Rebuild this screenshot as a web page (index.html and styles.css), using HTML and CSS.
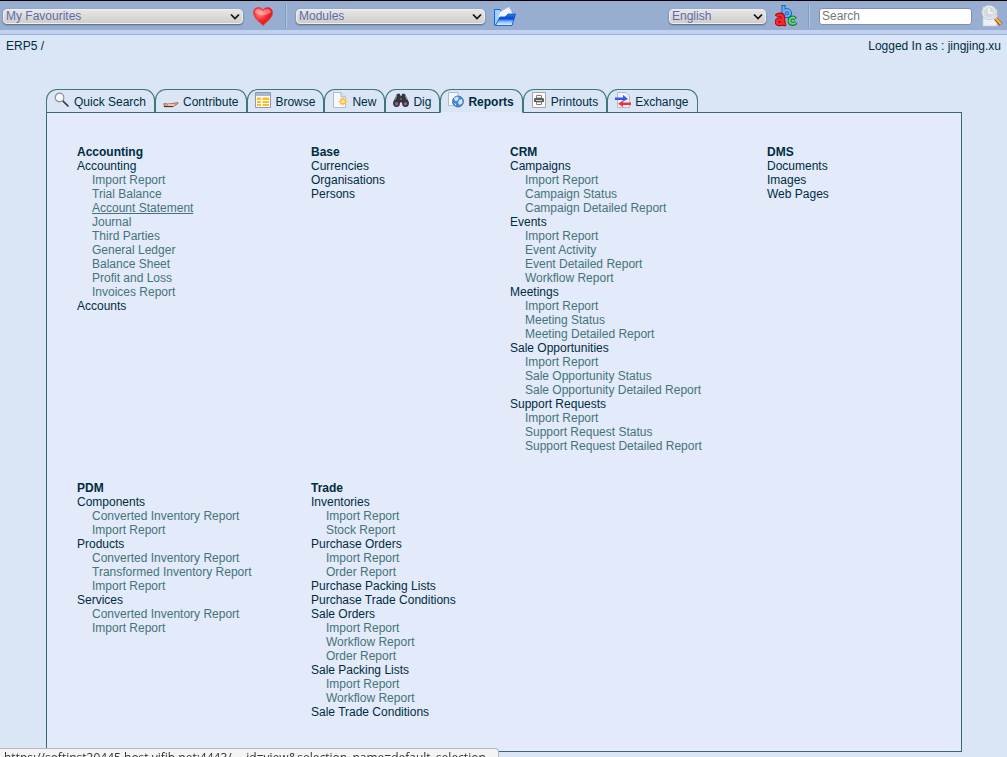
FILE: index.html
```
<!DOCTYPE html>
<html lang="en">
<head>
<meta charset="utf-8">
<title>ERP5</title>
<link rel="stylesheet" href="styles.css">
</head>
<body>
<header class="bar">
  <form class="group">
    <select class="pick wide" aria-label="My Favourites"><option>My Favourites</option></select>
    <button class="icon-btn" type="button" aria-label="Go to favourite">
      <svg width="22" height="22" viewBox="0 0 22 22"><defs><radialGradient id="h" cx=".35" cy=".35" r=".8"><stop offset="0" stop-color="#ff8a84"/><stop offset=".45" stop-color="#f8282c"/><stop offset="1" stop-color="#d00812"/></radialGradient></defs><path d="M11 20.500C8 17 1.500 13.500 1.500 7.500C1.500 4 4 2.500 6.500 2.500C9 2.500 10.500 4 11 5C11.500 4 13 2.500 15.500 2.500C18 2.500 20.500 4 20.500 7.500C20.500 13.500 14 17 11 20.500Z" fill="url(#h)" stroke="#d8444c" stroke-width=".8"/><path d="M3 7.500C3 4.500 5 3.700 7 3.900C9 4.100 10.500 6 11 6.500C12 5 14 3.700 16 4C18 4.400 19 5.500 19 7.500C14 11 8 11 3 7.500Z" fill="#fff" opacity=".35"/></svg>
    </button>
    <span class="rule"></span>
    <select class="pick modules" aria-label="Modules"><option>Modules</option></select>
    <button class="icon-btn" type="button" aria-label="Go to module">
      <svg width="22" height="22" viewBox="0 0 22 22"><defs><linearGradient id="f" x1="0" y1="0" x2="0" y2="1"><stop offset="0" stop-color="#2b80ee"/><stop offset=".4" stop-color="#0646d8"/><stop offset=".65" stop-color="#78baff"/><stop offset="1" stop-color="#f4fbff"/></linearGradient></defs><path d="M0.500 4.500H6L7 6.500H18V20H0.500Z" fill="#9dd4ff" stroke="#1764dc"/><path d="M4 12L6 7L15 2L19 9V12Z" fill="#f3f4ff" stroke="#c5c9ef" stroke-width=".7"/><path d="M1.500 20.500L6 12H11L14 9H21.500L18 20.500Z" fill="url(#f)" stroke="#0d4bd2" stroke-width=".8"/></svg>
    </button>
  </form>
  <form class="group">
    <select class="pick language" aria-label="Language"><option>English</option></select>
    <button class="icon-btn" type="button" aria-label="Change language">
      <svg width="22" height="22" viewBox="0 0 22 22" fill="none" stroke-linejoin="round"><g stroke="#1d56b4" stroke-width="4"><path d="M8.500 0V11"/><ellipse cx="12" cy="8.200" rx="3" ry="3"/></g><g stroke="#62b2f5" stroke-width="2.200"><path d="M8.500 .8V11"/><ellipse cx="12" cy="8.200" rx="3" ry="3"/></g><g stroke="#a9040f" stroke-width="4.600"><path d="M1.500 11.500C3.500 8.800 8 9.400 8 12.500V17.500Q8.300 19.200 11 18.800"/><ellipse cx="4.700" cy="16.800" rx="2.900" ry="2.200"/></g><g stroke="#f5282f" stroke-width="2.600"><path d="M2 11.200C4 9 8 9.600 8 12.500V17.500Q8.300 19.200 10.400 18.800"/><ellipse cx="4.700" cy="16.800" rx="2.900" ry="2.200"/></g><path d="M20.500 14C18 11.200 14.500 12.500 14.500 15.800C14.500 19 18 20.200 21 17.500" stroke="#087a35" stroke-width="4"/><path d="M20 13.500C17.500 11.500 14.500 13 14.500 15.800C14.500 18.700 18 19.700 20.500 17.800" stroke="#69d678" stroke-width="2"/></svg>
    </button>
    <span class="rule"></span>
    <input class="search" type="text" placeholder="Search" aria-label="Search">
    <button class="icon-btn" type="button" aria-label="Search">
      <svg width="22" height="22" viewBox="0 0 22 22"><path d="M2 2H13L16 5V21H2Z" fill="#eceff6" stroke="#c4cddd" stroke-width=".7"/><path d="M14.500 13.500L20 19.500" stroke="#a65b12" stroke-width="4"/><path d="M14.500 13L20 19" stroke="#f6b94c" stroke-width="2"/><circle cx="8" cy="7.500" r="6.400" fill="#d3dadd" stroke="#e6ebef" stroke-width="2"/><circle cx="8" cy="7.500" r="7.200" fill="none" stroke="#aab4c0" stroke-width=".6"/><path d="M8 3V8H12" fill="none" stroke="#f4f6f8" stroke-width="1.600"/></svg>
    </button>
  </form>
</header>
<div class="crumbs"><nav><a href="#">ERP5</a> /</nav><span>Logged In as : jingjing.xu</span></div>
<main class="main">
  <nav class="tabs">
    <a class="tab" href="#"><svg width="16" height="16" viewBox="0 0 16 16"><circle cx="5.500" cy="5.500" r="4.300" fill="#f4f7fc" stroke="#8c929b" stroke-width="1.200"/><path d="M8.800 8.800L14.500 14.500" stroke="#333b48" stroke-width="1.700"/></svg>Quick Search</a>
    <a class="tab" href="#"><svg width="16" height="16" viewBox="0 0 16 16"><path d="M1 11.500L5 12L10 11.500L14 10.500Q16 11 14.500 12L10 14.500H5L1 14Z" fill="#efab88" stroke="#8a4a34" stroke-width=".7"/><path d="M1 14.600H10" stroke="#3c2926"/><path d="M5 13H11" stroke="#ffe0ca"/></svg>Contribute</a>
    <a class="tab" href="#"><svg width="16" height="16" viewBox="0 0 16 16"><path d="M.5.5H15.500V15.500H.5Z" fill="#fff" stroke="#8e99b0"/><path d="M1 1H15V4H1Z" fill="#a9b8d3"/><path d="M2 5.500H6V8H2ZM7.500 5.500H14V8H7.500ZM2 9H6V11H2ZM7.500 9H14V11H7.500ZM2 12H6V14H2ZM7.500 12H14V14H7.500Z" fill="#fdbc24"/></svg>Browse</a>
    <a class="tab" href="#"><svg width="16" height="16" viewBox="0 0 16 16"><path d="M1.500.5H9L13.500 5V15.500H1.500Z" fill="#f7f9ff" stroke="#b3bad0"/><path d="M9 .5V5H13.500" fill="#dce1f0" stroke="#a9b1ca"/><path d="M11 4.500L12 7L14.500 6L13.500 8.500L16 9.500L13.500 10.500L14.500 13L12 12L11 14.500L10 12L7.500 13L8.500 10.500L6 9.500L8.500 8.500L7.500 6L10 7Z" fill="#ffbd45"/><circle cx="11" cy="9.500" r="1.600" fill="#fff1a5"/></svg>New</a>
    <a class="tab" href="#"><svg width="16" height="16" viewBox="0 0 16 16"><path d="M4 2L6.500 1.500L8 4.500L9.500 1.500L12 2L16 10.500Q16 15 12.500 15Q9 15 9 10.500H7Q7 15 3.500 15Q0 15 0 10.500Z" fill="#33353c"/><path d="M4 3.500L2 8M12 3.500L14 8M7 7H9" stroke="#898c96"/><circle cx="3.500" cy="11.800" r="1.800" fill="#93559d"/><circle cx="12.500" cy="11.800" r="1.800" fill="#93559d"/></svg>Dig</a>
    <a class="tab active" href="#" aria-current="page"><svg width="16" height="16" viewBox="0 0 16 16"><path d="M.5.5H10V13.500H.5Z" fill="#f5f7ff" stroke="#b4bbcf"/><circle cx="10" cy="9.500" r="5.500" fill="#4b87cc" stroke="#396aa8" stroke-width=".8"/><path d="M6 6L9 4.500L11 6L9 9L7 9ZM11 8L14 7L14.500 11L12 13L10 11ZM6 11L8 12L8 14Z" fill="#cce6fa"/></svg>Reports</a>
    <a class="tab" href="#"><svg width="16" height="16" viewBox="0 0 16 16"><path d="M1.500.5H14.500V15.500H1.500Z" fill="#fafafa" stroke="#a6a6a6"/><path d="M5.500 3.500H10.500V6H5.500ZM5.500 10H10.500V12.500H5.500Z" fill="#fff" stroke="#808080"/><path d="M4 6H12L13 7V10H3V7Z" fill="#5d5d5d"/><path d="M5 8.500H11" stroke="#c4d6bb"/></svg>Printouts</a>
    <a class="tab" href="#"><svg width="16" height="16" viewBox="0 0 16 16"><path d="M2.500.5H11L14.500 4V15.500H2.500Z" fill="#f0f2fa" stroke="#b5bacb"/><path d="M0 5.500H8V3L13 7L8 9.500V8H0Z" fill="#3158f0"/><path d="M16 10.500H8V8.500L3 11.700L8 15V13H16Z" fill="#f5303b"/></svg>Exchange</a>
  </nav>
  <div class="panel">
    <section><h2>Accounting</h2>
      <h3>Accounting</h3>
      <ul><li><a href="#">Import Report</a></li><li><a href="#">Trial Balance</a></li><li><a class="hovered" href="#">Account Statement</a></li><li><a href="#">Journal</a></li><li><a href="#">Third Parties</a></li><li><a href="#">General Ledger</a></li><li><a href="#">Balance Sheet</a></li><li><a href="#">Profit and Loss</a></li><li><a href="#">Invoices Report</a></li></ul>
      <h3>Accounts</h3>
    </section>
    <section><h2>Base</h2><h3>Currencies</h3><h3>Organisations</h3><h3>Persons</h3></section>
    <section><h2>CRM</h2>
      <h3>Campaigns</h3>
      <ul><li><a href="#">Import Report</a></li><li><a href="#">Campaign Status</a></li><li><a href="#">Campaign Detailed Report</a></li></ul>
      <h3>Events</h3>
      <ul><li><a href="#">Import Report</a></li><li><a href="#">Event Activity</a></li><li><a href="#">Event Detailed Report</a></li><li><a href="#">Workflow Report</a></li></ul>
      <h3>Meetings</h3>
      <ul><li><a href="#">Import Report</a></li><li><a href="#">Meeting Status</a></li><li><a href="#">Meeting Detailed Report</a></li></ul>
      <h3>Sale Opportunities</h3>
      <ul><li><a href="#">Import Report</a></li><li><a href="#">Sale Opportunity Status</a></li><li><a href="#">Sale Opportunity Detailed Report</a></li></ul>
      <h3>Support Requests</h3>
      <ul><li><a href="#">Import Report</a></li><li><a href="#">Support Request Status</a></li><li><a href="#">Support Request Detailed Report</a></li></ul>
    </section>
    <section><h2>DMS</h2><h3>Documents</h3><h3>Images</h3><h3>Web Pages</h3></section>
    <section><h2>PDM</h2>
      <h3>Components</h3>
      <ul><li><a href="#">Converted Inventory Report</a></li><li><a href="#">Import Report</a></li></ul>
      <h3>Products</h3>
      <ul><li><a href="#">Converted Inventory Report</a></li><li><a href="#">Transformed Inventory Report</a></li><li><a href="#">Import Report</a></li></ul>
      <h3>Services</h3>
      <ul><li><a href="#">Converted Inventory Report</a></li><li><a href="#">Import Report</a></li></ul>
    </section>
    <section><h2>Trade</h2>
      <h3>Inventories</h3>
      <ul><li><a href="#">Import Report</a></li><li><a href="#">Stock Report</a></li></ul>
      <h3>Purchase Orders</h3>
      <ul><li><a href="#">Import Report</a></li><li><a href="#">Order Report</a></li></ul>
      <h3>Purchase Packing Lists</h3>
      <h3>Purchase Trade Conditions</h3>
      <h3>Sale Orders</h3>
      <ul><li><a href="#">Import Report</a></li><li><a href="#">Workflow Report</a></li><li><a href="#">Order Report</a></li></ul>
      <h3>Sale Packing Lists</h3>
      <ul><li><a href="#">Import Report</a></li><li><a href="#">Workflow Report</a></li></ul>
      <h3>Sale Trade Conditions</h3>
    </section>
  </div>
</main>
<div class="status">https://softinst30445.host.vifib.net:4443/…_id=view&amp;selection_name=default_selection</div>
</body>
</html>
```
FILE: styles.css
```
* { box-sizing: border-box; }
body {
  margin: 0;
  background: #dae6f6;
  color: #002c3f;
  font: 12px/14px "Liberation Sans", Arial, sans-serif;
}
a { color: inherit; text-decoration: none; }

.bar {
  display: flex;
  justify-content: space-between;
  height: 35px;
  padding: 1px 4px 0 3px;
  border-top: 1px solid #000;
  border-bottom: 1px solid #98b0d3;
  background: linear-gradient(#98aed1 29px, #c0d2ef 29px);
}
.group { display: flex; align-items: center; height: 28px; }
.pick {
  appearance: none;
  height: 15px;
  padding: 0 2px;
  border: 1px solid #eeeeee;
  border-radius: 4px;
  background: url("data:image/svg+xml,%3Csvg xmlns='http://www.w3.org/2000/svg' width='10' height='7'%3E%3Cpath d='M1 1.500L5 5.500L9 1.500' fill='none' stroke='%23111' stroke-width='1.700'/%3E%3C/svg%3E") no-repeat right 2px center, linear-gradient(#e8e7e6, #d0cecb);
  box-shadow: 0 1px 2px #56647c;
  color: #5c6cab;
  font: 12px/13px "Liberation Sans", Arial, sans-serif;
}
.wide { width: 240px; }
.modules { width: 189px; }
.language { width: 97px; }
.icon-btn { display: flex; margin: 0 0 0 9px; padding: 0; border: 0; background: none; }
.rule { width: 2px; height: 24px; margin: 0 9px 0 11px; border-left: 1px solid #7f9dbd; background: #a9c9da; }
.search {
  width: 153px;
  height: 17px;
  padding: 0 2px;
  border: 1px solid #7891b4;
  border-radius: 3px;
  background: #fff;
  font: 12px/15px "Liberation Sans", Arial, sans-serif;
}
.search::placeholder { color: #777; }

.crumbs { display: flex; justify-content: space-between; padding: 4px 6px; }
.main { padding: 32px 45px 5px 46px; }
.tabs { display: flex; position: relative; height: 24px; }
.tab {
  display: flex;
  align-items: center;
  gap: 4px;
  padding: 2px 8px 0 7px;
  border: 1px solid #3d7777;
  border-bottom-color: #3a6678;
  border-radius: 11px 11px 0 0;
  white-space: nowrap;
}
.tab svg { align-self: flex-start; }
.active { border-bottom-color: #e3eafa; font-weight: bold; }

.panel {
  display: grid;
  grid-template-columns: 234fr 199fr 257fr 164fr;
  row-gap: 28px;
  margin-top: -1px;
  padding: 32px 30px;
  border: 1px solid #3a6678;
  background: #e3eafa;
}
h2, h3 { margin: 0; font-size: 12px; line-height: 14px; }
h3 { font-weight: normal; }
ul { margin: 0; padding: 0 0 0 15px; list-style: none; color: #437479; }
.hovered { text-decoration: underline; }

.status {
  position: fixed;
  bottom: 0;
  left: 0;
  height: 9px;
  padding: 1px 12px 0 4px;
  overflow: hidden;
  border: 1px solid #b9b9b9;
  border-width: 1px 1px 0 0;
  border-radius: 0 4px 0 0;
  background: #f4f4f4;
  color: #333;
  font: 12px/16px "Open Sans", sans-serif;
  white-space: nowrap;
}
```
